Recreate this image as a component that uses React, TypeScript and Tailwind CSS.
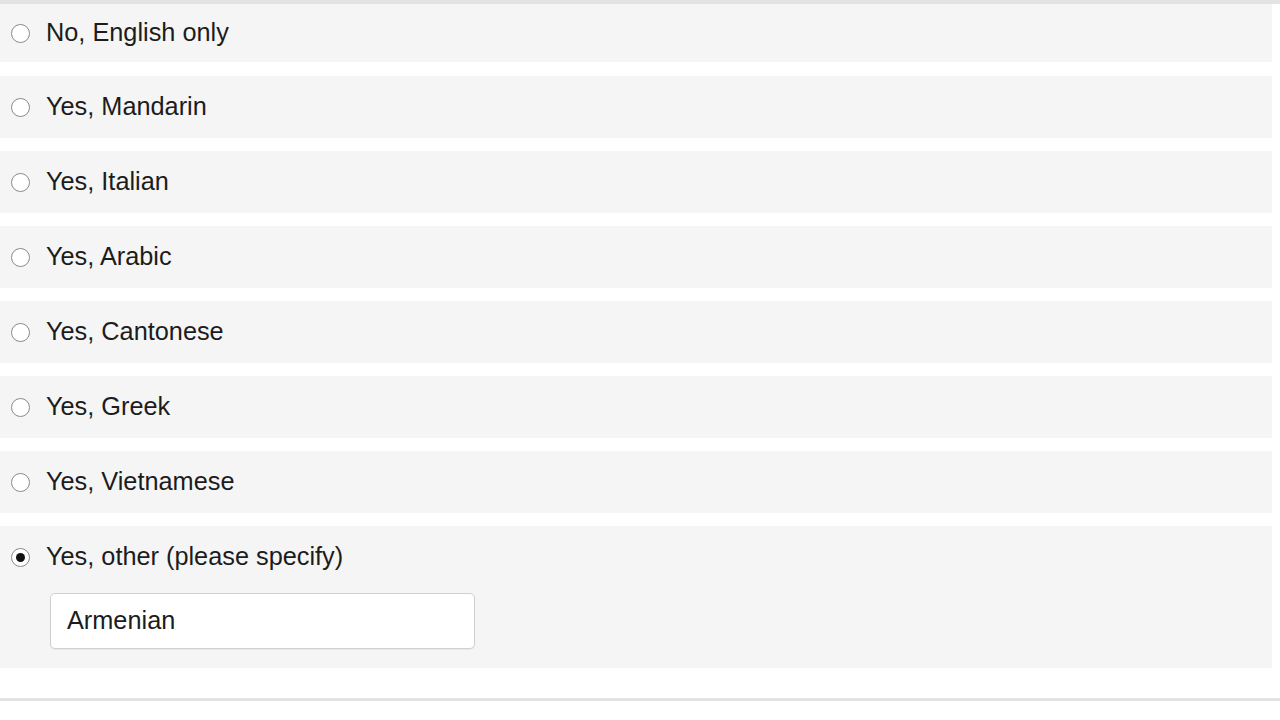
import React from "react";

const options = [
  "No, English only",
  "Yes, Mandarin",
  "Yes, Italian",
  "Yes, Arabic",
  "Yes, Cantonese",
  "Yes, Greek",
  "Yes, Vietnamese",
];

function Radio({ checked }: { checked?: boolean }) {
  return (
    <span className="flex h-[19px] w-[19px] shrink-0 items-center justify-center rounded-full border-[1.5px] border-[#8a8a8a] bg-white">
      {checked && <span className="h-[9px] w-[9px] rounded-full bg-[#111]" />}
    </span>
  );
}

export default function App() {
  return (
    <div
      className="h-[720px] w-[1280px] overflow-hidden bg-white text-[25.3px] text-[#1c1c1c]"
      style={{ fontFamily: '"Liberation Sans", Arial, sans-serif' }}
    >
      <div className="h-[4px] w-full bg-[#e3e3e3]" />
      <div className="flex w-[1272px] flex-col">
        {options.map((o, i) => (
          <div
            key={o}
            className={`flex items-center gap-[16px] bg-[#f5f5f5] pl-[11px] ${
              i === 0 ? "mt-0 h-[58px]" : "mt-[13px] h-[62px]"
            } ${i === 1 ? "mt-[14px]" : ""}`}
          >
            <Radio />
            <span className="leading-none">{o}</span>
          </div>
        ))}
        <div className="mt-[13px] flex h-[142px] flex-col bg-[#f5f5f5]">
          <div className="flex h-[62px] items-center gap-[16px] pl-[11px]">
            <Radio checked />
            <span className="leading-none">Yes, other (please specify)</span>
          </div>
          <div className="mt-[5px] pl-[50px]">
            <div className="flex h-[56px] w-[425px] items-center rounded-[5px] border border-[#d0d0d0] bg-white pl-[16px] shadow-[0_1px_1px_rgba(0,0,0,0.05)]">
              Armenian
            </div>
          </div>
        </div>
      </div>
      <div className="mt-[30px] h-[3px] w-full bg-[#e3e3e3]" />
    </div>
  );
}
